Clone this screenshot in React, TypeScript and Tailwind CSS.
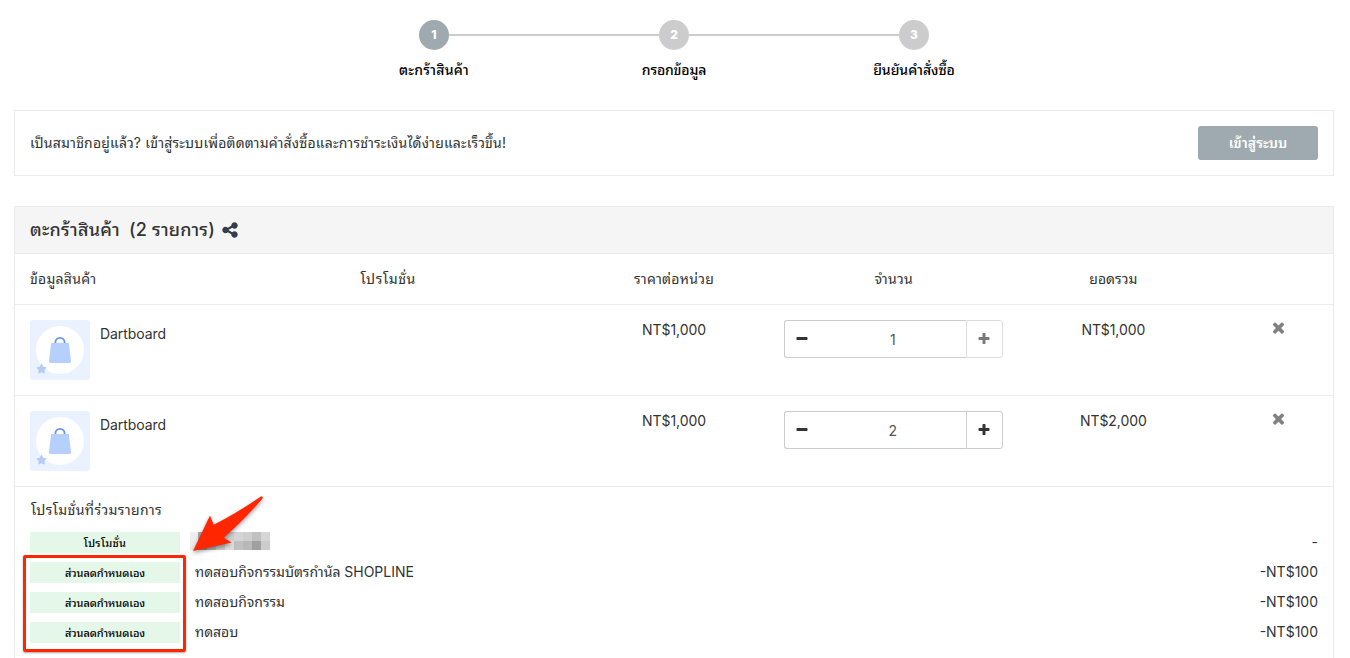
import { clsx } from 'clsx';

interface CartItem {
  id: number;
  name: string;
  price: string;
  quantity: number;
  total: string;
  canIncrease: boolean;
}

interface Promotion {
  id: number;
  label: string;
  name?: string;
  discount: string;
}

const steps = [
  { number: 1, label: 'ตะกร้าสินค้า', spacing: 'tracking-[0.2px]' },
  { number: 2, label: 'กรอกข้อมูล', spacing: 'tracking-[-0.2px]' },
  { number: 3, label: 'ยืนยันคำสั่งซื้อ', spacing: 'tracking-[-0.05px]' }
];

const items: CartItem[] = [
  { id: 1, name: 'Dartboard', price: 'NT$1,000', quantity: 1, total: 'NT$1,000', canIncrease: false },
  { id: 2, name: 'Dartboard', price: 'NT$1,000', quantity: 2, total: 'NT$2,000', canIncrease: true }
];

const promotions: Promotion[] = [
  { id: 1, label: 'โปรโมชั่น', discount: '-' },
  { id: 2, label: 'ส่วนลดกำหนดเอง', name: 'ทดสอบกิจกรรมบัตรกำนัล SHOPLINE', discount: '-NT$100' },
  { id: 3, label: 'ส่วนลดกำหนดเอง', name: 'ทดสอบกิจกรรม', discount: '-NT$100' },
  { id: 4, label: 'ส่วนลดกำหนดเอง', name: 'ทดสอบ', discount: '-NT$100' }
];

const icons = {
  times: 'M1490 1322q0 40-28 68l-136 136q-28 28-68 28t-68-28l-294-294-294 294q-28 28-68 28t-68-28l-136-136q-28-28-28-68t28-68l294-294-294-294q-28-28-28-68t28-68l136-136q28-28 68-28t68 28l294 294 294-294q28-28 68-28t68 28l136 136q28 28 28 68t-28 68l-294 294 294 294q28 28 28 68z',
  plus: 'M1600 736v192q0 40-28 68t-68 28h-416v416q0 40-28 68t-68 28h-192q-40 0-68-28t-28-68v-416h-416q-40 0-68-28t-28-68v-192q0-40 28-68t68-28h416v-416q0-40 28-68t68-28h192q40 0 68 28t28 68v416h416q40 0 68 28t28 68z',
  minus: 'M1600 736v192q0 40-28 68t-68 28h-1216q-40 0-68-28t-28-68v-192q0-40 28-68t68-28h1216q40 0 68 28t28 68z',
  share: 'M1344 1024q133 0 226.5 93.5t93.5 226.5-93.5 226.5-226.5 93.5-226.5-93.5-93.5-226.5q0-12 2-34l-360-180q-92 86-218 86-133 0-226.5-93.5t-93.5-226.5 93.5-226.5 226.5-93.5q126 0 218 86l360-180q-2-22-2-34 0-133 93.5-226.5t226.5-93.5 226.5 93.5 93.5 226.5-93.5 226.5-226.5 93.5q-126 0-218-86l-360 180q2 22 2 34t-2 34l360 180q92-86 218-86z'
};

const Icon = ({ name, className }: { name: keyof typeof icons; className?: string }) => (
  <svg className={className} viewBox="0 0 1792 1792" fill="currentColor">
    <path d={icons[name]} />
  </svg>
);

const ProductImage = () => (
  <svg className="h-[60px] w-[60px] flex-shrink-0" viewBox="0 0 60 60">
    <rect width="60" height="60" rx="3" fill="#ebf2ff" />
    <circle cx="30" cy="30" r="24" fill="#fff" />
    <path d="M25.400 24v-1.500a4.600 4.600 0 0 1 9.200 0V24" fill="none" stroke="#6395ea" strokeWidth="1.800" />
    <path d="M21.200 23h17.600l2.300 18.200q.2 1.800-1.500 1.800h-19.200q-1.700 0-1.500-1.800z" fill="#b5d0fc" />
    <path d="M11.500 43.500l1.800 3.200 3.500.7-2.400 2.700.4 3.700-3.300-1.500-3.300 1.500.4-3.700-2.400-2.700 3.500-.7z" fill="#b5cbf2" />
  </svg>
);

const Stepper = () => (
  <div className="relative flex justify-center pt-5">
    <div className="absolute top-[34px] left-[434px] h-0.5 w-[480px] bg-[#ccc]"></div>
    {steps.map((step) => (
      <div key={step.number} className="relative flex w-60 flex-col items-center">
        <div
          className={clsx(
            'flex h-[30px] w-[30px] items-center justify-center rounded-full text-xs font-extrabold text-white',
            step.number === 1 ? 'bg-[#9ea9b0]' : 'bg-[#ccc]'
          )}
        >
          {step.number}
        </div>
        <div className={clsx('mt-2.5 text-sm leading-5 font-medium text-black', step.spacing)}>{step.label}</div>
      </div>
    ))}
  </div>
);

const QuantityInput = ({ item }: { item: CartItem }) => (
  <div className="flex h-[38px] w-[219px]">
    <button className="flex w-9 items-center justify-center rounded-l-[3px] border border-r-0 border-[#ccc]">
      <Icon name="minus" className="h-3.5 w-3.5" />
    </button>
    <div className="flex flex-1 items-center justify-center border-y border-[#ccc] pt-0.5 text-[#555]">
      {item.quantity}
    </div>
    <button
      className={clsx(
        'flex w-[37px] items-center justify-center rounded-r-[3px] border border-[#ccc]',
        !item.canIncrease && 'opacity-65'
      )}
    >
      <Icon name="plus" className="h-3.5 w-3.5" />
    </button>
  </div>
);

// Hidden campaign name
const mosaic = [
  ['#eeeeee', '#a9a9a9', '#bdbdbd', '#c8c8c8', '#cfcfcf', '#d5d5d5', '#cfcfcf', '#c1c1c1', '#d6d6d6'],
  ['#ececec', '#999999', '#b3b3b3', '#c9c9c9', '#dedede', '#c0c0c0', '#b8b8b8', '#a0a0a0', '#cccccc']
];

const Mosaic = () => (
  <svg className="-ml-[5px] h-[18px] w-20" viewBox="0 0 80 18" shapeRendering="crispEdges">
    {mosaic.map((row, y) =>
      row.map((color, x) => <rect key={`${x}-${y}`} x={x === 0 ? 0 : x * 9 - 1} y={y * 9} width="9" height="9" fill={color} />)
    )}
  </svg>
);

const PromotionRow = ({ promotion }: { promotion: Promotion }) => (
  <div className="flex h-[21px]">
    <div
      className={clsx(
        'flex h-[21px] w-[150px] items-center justify-center bg-[#e5f7e8] text-[11px] font-medium text-black',
        promotion.name ? 'tracking-[-0.1px]' : 'tracking-[0.25px]'
      )}
    >
      {promotion.label}
    </div>
    <div className="h-[21px] flex-1 pl-[15px] leading-5 tracking-[-0.03px]">{promotion.name ?? <Mosaic />}</div>
    <div className="leading-5">{promotion.discount}</div>
  </div>
);

const columns = 'grid grid-cols-[3fr_2fr_2fr_2fr_2fr_1fr]';

export default function App() {
  return (
    <div className="relative h-[658px] w-[1350px] overflow-hidden bg-white font-['Inter','Noto_Sans_Thai_Looped','Loma','Noto_Sans_Thai',sans-serif] text-sm leading-5 text-[#333]">
      <div className="w-[1348px]">
        <Stepper />
      </div>

      <div className="mt-[30px] ml-3.5 flex h-[66px] w-[1320px] items-center justify-between border border-[#ebebeb] px-[15px]">
        <span className="tracking-[0.18px]">
          เป็นสมาชิกอยู่แล้ว? เข้าสู่ระบบเพื่อติดตามคำสั่งซื้อและการชำระเงินได้ง่ายและเร็วขึ้น!
        </span>
        <button className="h-[34px] w-[120px] rounded-[3px] bg-[#9ea9b0] font-semibold text-white">
          เข้าสู่ระบบ
        </button>
      </div>

      <div className="mt-[30px] ml-3.5 h-[500px] w-[1320px] border border-[#ebebeb]">
        <div className="flex h-[47px] items-center border-b border-[#ebebeb] bg-[#f5f5f5] px-[15px] text-lg font-medium">
          <span className="tracking-[0.25px]">ตะกร้าสินค้า</span>
          <span className="ml-[9px] tracking-[0.2px]">(2 รายการ)</span>
          <Icon name="share" className="ml-1.5 h-[18px] w-[18px] text-[#333e4b]" />
        </div>

        <div className={clsx(columns, 'h-[51px] items-center border-b border-[#ebebeb] text-center tracking-[0.25px]')}>
          <div className="pl-[15px] text-left">ข้อมูลสินค้า</div>
          <div className="pl-4 text-left tracking-[0.6px]">โปรโมชั่น</div>
          <div>ราคาต่อหน่วย</div>
          <div>จำนวน</div>
          <div className="tracking-normal">ยอดรวม</div>
        </div>

        {items.map((item) => (
          <div
            key={item.id}
            className={clsx(columns, 'h-[91px] border-b border-[#ebebeb] pt-[15px] text-center tracking-[-0.08px]')}
          >
            <div className="flex pl-[15px]">
              <ProductImage />
              <span className="mt-1 ml-2.5">{item.name}</span>
            </div>
            <div></div>
            <div>{item.price}</div>
            <QuantityInput item={item} />
            <div>{item.total}</div>
            <div className="-mt-px flex justify-center">
              <Icon name="times" className="h-[17px] w-[17px] text-[#808080]" />
            </div>
          </div>
        ))}

        <div className="px-[15px] pt-[13px]">
          <div className="pl-px tracking-[0.38px]">โปรโมชั่นที่ร่วมรายการ</div>
          <div className="mt-3 flex flex-col gap-[9px]">
            {promotions.map((promotion) => (
              <PromotionRow key={promotion.id} promotion={promotion} />
            ))}
          </div>
        </div>
      </div>

      {/* Callout over the custom discounts */}
      <div className="absolute top-[555px] left-[23px] h-[97px] w-[163px] rounded-[2px] border-3 border-[#ff2600] shadow-[0_1px_2px_rgba(0,0,0,0.35)]"></div>
      <svg className="absolute top-[490px] left-[184px] h-[68px] w-[90px] drop-shadow-[0_2px_2px_rgba(0,0,0,0.4)]" viewBox="0 0 90 68">
        <path d="M9 61l17-35.500 3.700 9.300Q53 23 77.300 6.200q2 .3 1.200 2.300Q60 30 39.700 47.700l8 4.800z" fill="#ff2600" />
      </svg>
    </div>
  );
}
